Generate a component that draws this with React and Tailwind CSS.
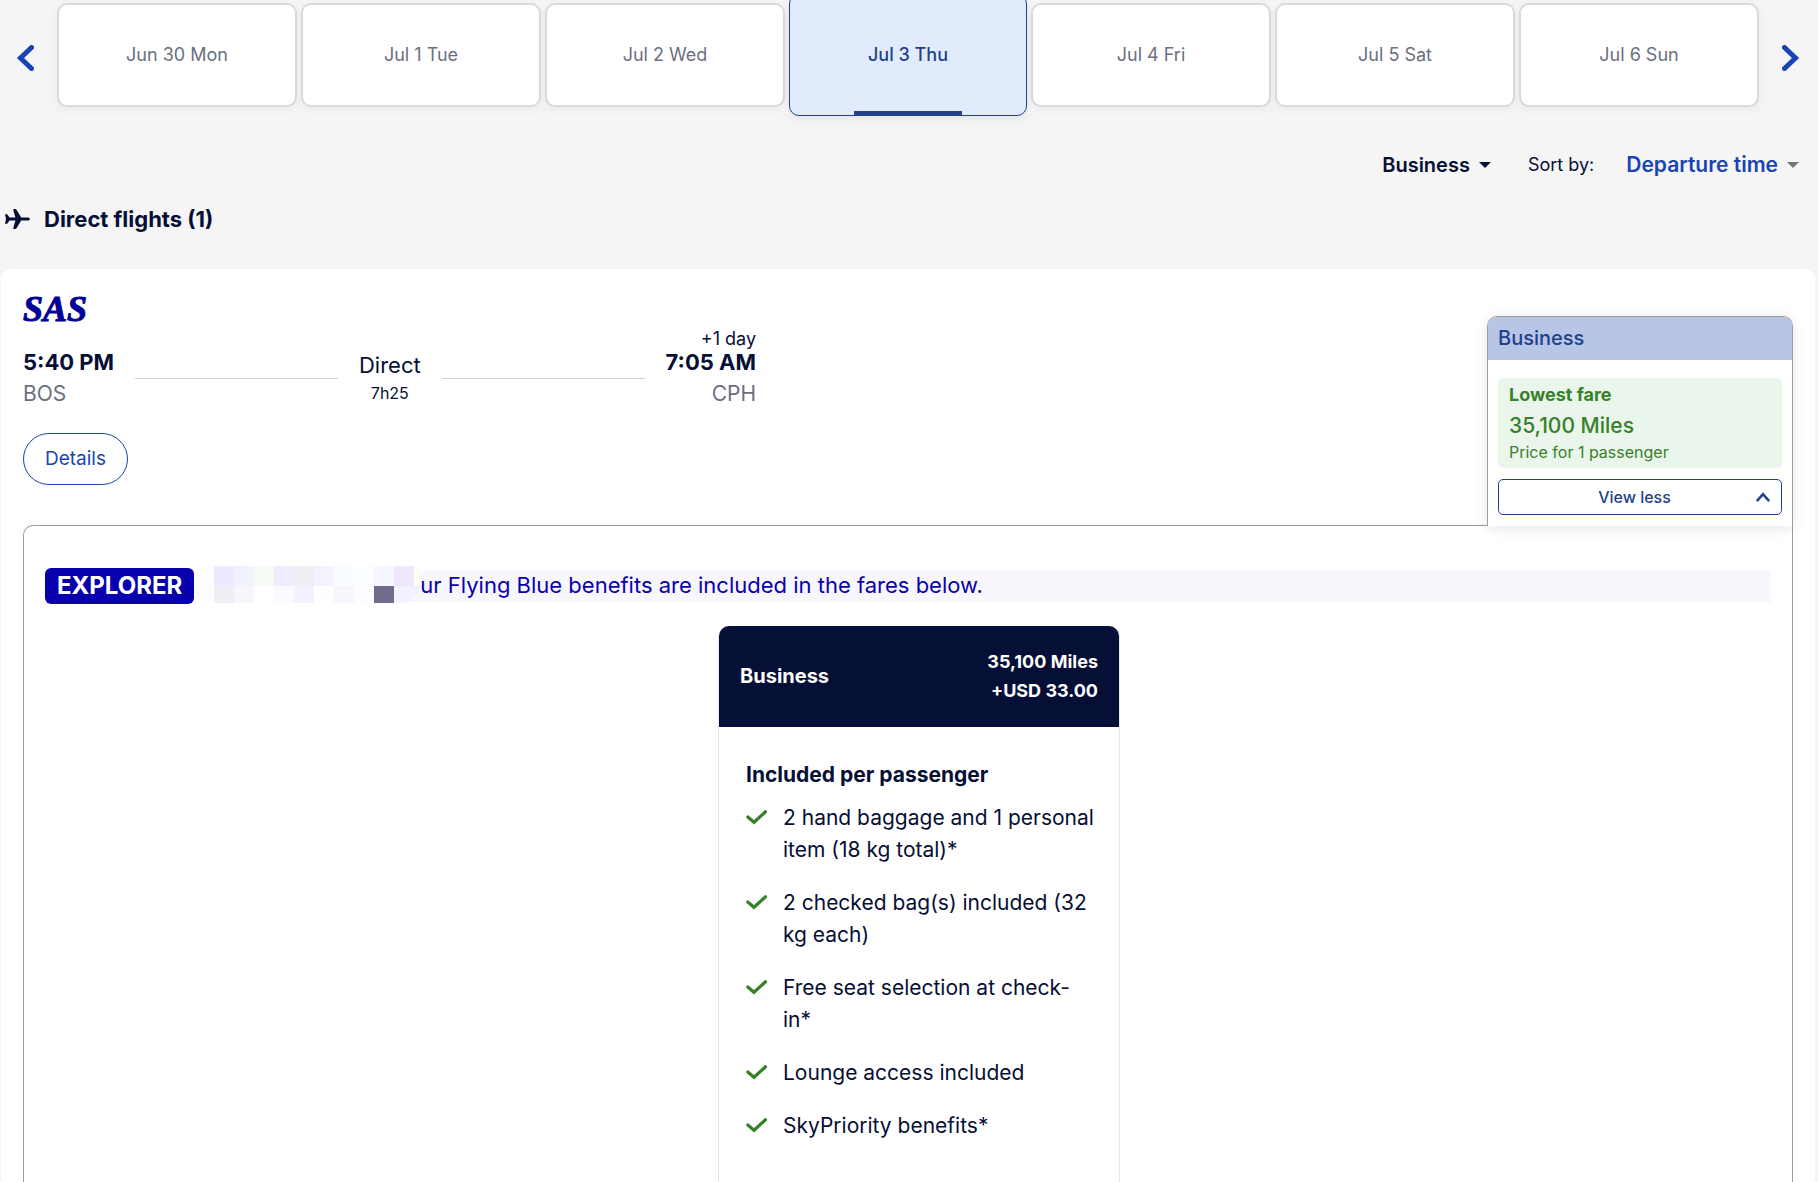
const days = [
  { label: "Jun 30 Mon" },
  { label: "Jul 1 Tue" },
  { label: "Jul 2 Wed" },
  { label: "Jul 3 Thu", selected: true },
  { label: "Jul 4 Fri" },
  { label: "Jul 5 Sat" },
  { label: "Jul 6 Sun" },
];

const benefits = [
  "2 hand baggage and 1 personal item (18 kg total)*",
  "2 checked bag(s) included (32 kg each)",
  "Free seat selection at check-in*",
  "Lounge access included",
  "SkyPriority benefits*",
];

const mosaicTop = ["bg-[#fdfdff]", "bg-[#eee9fe]", "bg-[#f2f2fe]", "bg-[#f6fbf4]", "bg-[#efecfe]", "bg-[#eeeef3]", "bg-[#f6f1fe]", "bg-[#f9fdff]", "bg-[#fdfeff]", "bg-[#f5f6ff]", "bg-[#f0e7fd]", "bg-[#fbfcf2]"];
const mosaicBottom = ["bg-[#fdfdff]", "bg-[#eeeef4]", "bg-[#f7f6fd]", "bg-[#ffffff]", "bg-[#fcf9ff]", "bg-[#f3f1fe]", "bg-[#fefeff]", "bg-[#f7f6fd]", "bg-[#fdfdff]", "bg-[#706d8c]", "bg-[#f3f1fe]", "bg-[#f3f1fe]"];

function Chevron({ flip }) {
  return (
    <svg width="18" height="26" viewBox="0 0 18 26" fill="none" stroke="#1a44b3" strokeWidth="5" strokeLinecap="round" aria-hidden="true">
      <path d={flip ? "M2.5 2.5 13.5 13 2.5 23.5" : "M15.5 2.5 4.5 13 15.5 23.5"} />
    </svg>
  );
}

function Day({ label, selected }) {
  if (selected) {
    return (
      <button
        type="button"
        aria-pressed="true"
        className="relative -my-[9px] flex flex-1 items-center justify-center rounded-[10px] border border-[#1f4288] bg-[#e2ebfc] font-medium text-[#1f4288] shadow-[0_3px_8px_rgba(0,0,0,0.07)]"
      >
        {label}
        <span className="absolute bottom-0 left-1/2 h-1 w-[108px] -translate-x-1/2 bg-[#1f4288]" />
      </button>
    );
  }
  return (
    <button
      type="button"
      aria-pressed="false"
      className="flex flex-1 items-center justify-center rounded-[10px] border-2 border-[#dadada] bg-white bg-clip-padding text-[#6b6f80] shadow-[0_3px_8px_rgba(0,0,0,0.05)]"
    >
      {label}
    </button>
  );
}

function Dropdown({ label, value, options, tone, caret }) {
  return (
    <span className="flex items-center gap-[9px]">
      <select aria-label={label} defaultValue={value} className={"field-sizing-content appearance-none bg-transparent font-semibold " + tone}>
        {options.map((o) => (
          <option key={o}>{o}</option>
        ))}
      </select>
      <svg width="12" height="6" viewBox="0 0 12 6" aria-hidden="true" className={caret}>
        <path d="M0 0h12L6 6z" fill="currentColor" />
      </svg>
    </span>
  );
}

function Plane() {
  return (
    <svg width="25" height="20" viewBox="0 0 25 20" fill="#060f35" aria-hidden="true">
      <path d="M0 5.200h2.200l2.300 3.200h5.900L8.400 1.400C8 .6 8.400 0 9.200 0h1c.6 0 1 .3 1.300.8L16.200 8.400h7c2.200.4 2.200 2.800 0 3.200h-7l-4.700 7.600c-.3.5-.7.8-1.300.8h-1c-.8 0-1.200-.6-.8-1.400l2-7H4.500l-2.300 3.200H0L1 10z" />
    </svg>
  );
}

function Itinerary() {
  return (
    <div className="flex w-full max-w-[733px] items-end gap-[21px]">
      <div>
        <p className="text-[22px] leading-7 font-bold whitespace-nowrap">5:40 PM</p>
        <p className="text-[21px] leading-9 text-[#6b6f80]">BOS</p>
      </div>
      <div className="mb-[33px] h-px flex-1 bg-[#cfd0d6]" />
      <div className="pb-[5px] text-center">
        <p className="text-[22px] leading-7">Direct</p>
        <p className="text-base leading-7">7h25</p>
      </div>
      <div className="mb-[33px] h-px flex-1 bg-[#cfd0d6]" />
      <div className="text-right">
        <p className="text-lg leading-[18px]">+1 day</p>
        <p className="text-[22px] leading-7 font-bold whitespace-nowrap">7:05 AM</p>
        <p className="text-[21px] leading-9 text-[#6b6f80]">CPH</p>
      </div>
    </div>
  );
}

function FareTab() {
  return (
    <section className="relative z-10 -mb-px w-[306px] shrink-0 overflow-hidden rounded-t-[10px] border-x border-t border-[#9d9d9f] bg-white shadow-[0_2px_14px_rgba(0,0,0,0.1)]">
      <h3 className="bg-[#b7c5e7] px-2.5 text-xl leading-[43px] font-medium text-[#1f4288]">Business</h3>
      <div className="px-2.5 pt-[18px] pb-[11px]">
        <div className="rounded-[5px] bg-[#eaf5ec] px-[11px] pt-px pb-[5px] text-[#378128]">
          <p className="text-lg leading-8 font-bold">Lowest fare</p>
          <p className="text-[21px] leading-[30px] font-medium">35,100 Miles</p>
          <p className="text-base leading-[22px]">Price for 1 passenger</p>
        </div>
        <button
          type="button"
          aria-expanded="true"
          className="mt-[11px] flex h-9 w-full items-center rounded-[5px] border border-[#1f4288] pr-[11px] pb-px pl-3.5 text-base font-medium text-[#1f4288]"
        >
          <span className="flex-1 text-center">View less</span>
          <svg width="14" height="10" viewBox="0 0 14 10" fill="none" stroke="#1f4288" strokeWidth="2.5" strokeLinecap="round" aria-hidden="true">
            <path d="M1.500 8.300 7 2.200l5.500 6.100" />
          </svg>
        </button>
      </div>
    </section>
  );
}

function MemberBanner() {
  return (
    <div className="flex items-center">
      <strong className="rounded-[6px] bg-[#0800ac] px-3 text-2xl leading-9 font-bold text-white">EXPLORER</strong>
      <div aria-hidden="true" className="relative z-10 -mt-1 ml-1 w-[222px] overflow-hidden rounded-b-[20px]">
        <div className="grid grid-cols-[16px_repeat(10,20px)_6px]">
          {mosaicTop.map((c, i) => (
            <span key={i} className={"h-5 " + c} />
          ))}
          {mosaicBottom.map((c, i) => (
            <span key={i} className={"h-[17px] " + c} />
          ))}
        </div>
      </div>
      <p className="-ml-5 flex-1 bg-[#f7f7fd] pb-0.5 pl-5 text-[22px] leading-[30px] text-[#0a00b0]">
        ur Flying Blue benefits are included in the fares below.
      </p>
    </div>
  );
}

function FareCard() {
  return (
    <article className="flex w-[402px] flex-1 flex-col rounded-t-[10px] border-x border-[#e6e6e8]">
      <header className="flex h-[101px] items-center justify-between rounded-t-[10px] bg-[#060f35] px-[21px] pb-0.5 font-bold text-white">
        <h3 className="text-xl">Business</h3>
        <p className="text-right text-lg leading-[29px]">
          35,100 Miles
          <br />
          +USD 33.00
        </p>
      </header>
      <div className="pt-8 pr-6 pl-[27px] text-[21px] leading-8">
        <h4 className="font-bold">Included per passenger</h4>
        <ul className="mt-[11px] flex flex-col gap-[21px]">
          {benefits.map((b) => (
            <li key={b} className="flex items-start gap-[15px]">
              <svg width="22" height="32" viewBox="0 0 22 32" fill="none" stroke="#378128" strokeWidth="3.200" strokeLinecap="round" aria-hidden="true" className="shrink-0">
                <path d="M1.800 15 8 20.300 19.500 9.800" />
              </svg>
              <span>{b}</span>
            </li>
          ))}
        </ul>
      </div>
    </article>
  );
}

export default function App() {
  return (
    <div className="flex min-h-screen flex-col overflow-hidden bg-[#f5f5f5] font-['Inter',sans-serif] text-[#060f35]">
      <nav aria-label="Departure date" className="flex pt-[3px]">
        <button type="button" aria-label="Previous dates" className="flex w-[57px] items-center pt-1.5 pl-4">
          <Chevron />
        </button>
        <div className="flex h-[104px] flex-1 gap-1 text-lg">
          {days.map((d) => (
            <Day key={d.label} {...d} />
          ))}
        </div>
        <button type="button" aria-label="Next dates" className="flex w-[59px] items-center justify-end pt-1.5 pr-[18px]">
          <Chevron flip />
        </button>
      </nav>

      <div className="mt-[42px] flex h-8 items-center justify-end gap-[37px] pr-[19px]">
        <Dropdown label="Cabin" value="Business" options={["Business", "Economy"]} tone="text-xl text-[#060f35]" caret="text-[#060f35]" />
        <div className="flex items-center gap-8">
          <span className="text-lg">Sort by:</span>
          <Dropdown label="Sort by" value="Departure time" options={["Departure time", "Arrival time"]} tone="text-[21px] text-[#1a44b3]" caret="text-[#757575]" />
        </div>
      </div>

      <h2 className="mt-[22px] flex h-8 items-center gap-3.5 pl-[5px] text-[22px] font-bold">
        <Plane />
        Direct flights (1)
      </h2>

      <main className="mt-[34px] mr-[3px] ml-px flex flex-1 flex-col rounded-t-[10px] bg-white px-[22px] pt-7">
        <div className="flex items-end justify-between">
          <div className="flex-1">
            <p className="font-['Liberation_Serif',serif] text-4xl leading-6 font-bold text-[#000099] italic [-webkit-text-stroke:1px_#000099]">SAS</p>
            <div className="mt-[9px]">
              <Itinerary />
            </div>
            <button type="button" className="mt-[21px] mb-10 h-[52px] rounded-full border border-[#1a44b3] px-[21px] text-[19px] text-[#1a44b3]">
              Details
            </button>
          </div>
          <FareTab />
        </div>

        <div className="flex flex-1 flex-col rounded-tl-[10px] border-x border-t border-[#9d9d9f] px-[21px] pt-[42px]">
          <MemberBanner />
          <div className="mt-[22px] flex flex-1 flex-col items-center pl-[22px]">
            <FareCard />
          </div>
        </div>
      </main>
    </div>
  );
}
